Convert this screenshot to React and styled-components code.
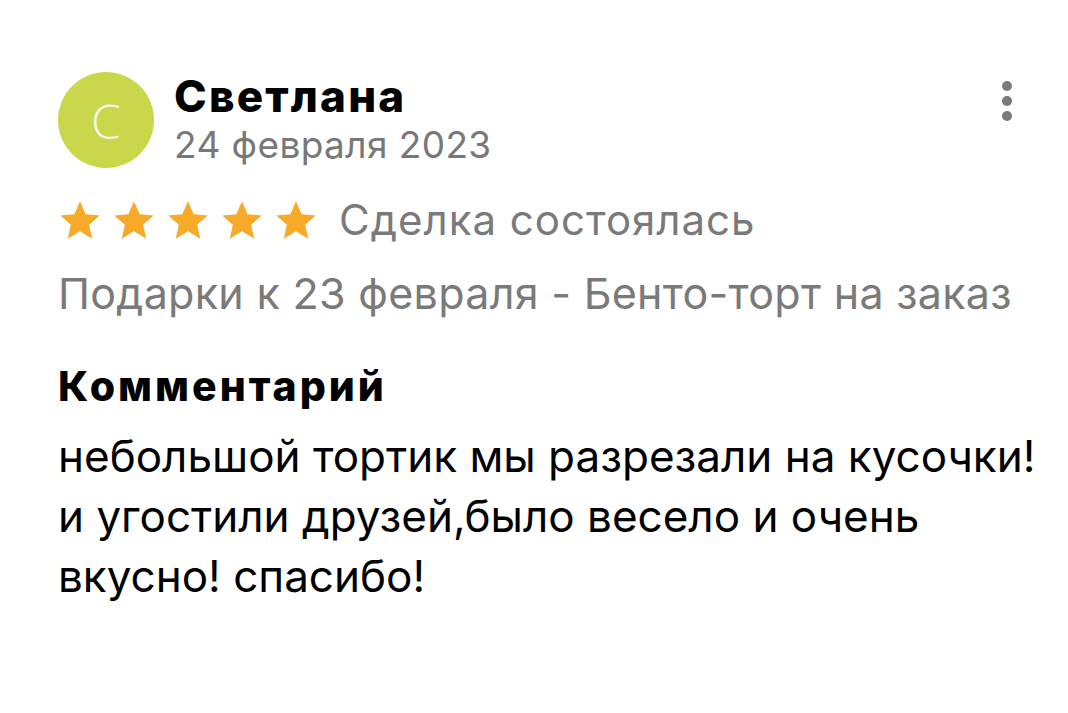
import React from "react";
import styled, { createGlobalStyle } from "styled-components";

const Global = createGlobalStyle`
  html, body { margin: 0; padding: 0; background: #ffffff; }
  body { font-family: Inter, Roboto, "Noto Sans", sans-serif; -webkit-font-smoothing: antialiased; }
`;

const Page = styled.div`
  width: 1068px;
  height: 713px;
  box-sizing: border-box;
  padding: 72px 10px 0 58px;
  background: #fff;
`;

const Header = styled.div`
  display: flex;
  align-items: flex-start;
  padding-right: 40px;
`;

const Avatar = styled.div`
  width: 96px;
  height: 96px;
  border-radius: 50%;
  background: #c9d84a;
  color: #f6f7e4;
  display: flex;
  align-items: center;
  justify-content: center;
  font-family: "Open Sans", sans-serif;
  font-weight: 300;
  font-size: 48px;
  flex-shrink: 0;
`;

const Who = styled.div`
  margin-left: 20px;
  display: flex;
  flex-direction: column;
  flex: 1;
`;

const Name = styled.div`
  font-size: 44px;
  font-weight: 800;
  color: #000;
  line-height: 48px;
  letter-spacing: 2.2px;
`;

const DateText = styled.div`
  font-size: 37px;
  color: #787878;
  line-height: 50px;
  letter-spacing: 0.4px;
`;

const MoreButton = styled.button`
  border: 0;
  background: none;
  padding: 9px 6px 0;
  display: flex;
  flex-direction: column;
  gap: 5px;
`;

const Dot = styled.span`
  width: 10px;
  height: 10px;
  border-radius: 50%;
  background: #7a7a7a;
`;

const RatingRow = styled.div`
  display: flex;
  align-items: center;
  margin-top: 24px;
`;

const Stars = styled.div`
  display: flex;
  gap: 10px;
  margin-right: 21px;
`;

const Status = styled.span`
  font-size: 42px;
  color: #7a7a7a;
  letter-spacing: 1px;
`;

const Subject = styled.div`
  margin-top: 20px;
  font-size: 43px;
  color: #7a7a7a;
  line-height: 56px;
  letter-spacing: 0.3px;
`;

const CommentTitle = styled.div`
  margin-top: 40px;
  font-size: 41px;
  font-weight: 800;
  color: #000;
  line-height: 50px;
  letter-spacing: 3px;
`;

const CommentBody = styled.p`
  margin: 15px 0 0;
  width: 1000px;
  font-size: 44px;
  color: #000;
  line-height: 60px;
`;

const Star = () => (
  <svg width="44" height="42" viewBox="0 0 24 23">
    <path
      d="M12 1.2l3.1 7.1 7.7.7-5.8 5.1 1.7 7.6L12 17.7l-6.7 4 1.7-7.6L1.2 9l7.7-.7z"
      fill="#f7a928"
    />
  </svg>
);

export default function App() {
  return (
    <>
      <Global />
      <Page>
        <Header>
          <Avatar>C</Avatar>
          <Who>
            <Name>Светлана</Name>
            <DateText>24 февраля 2023</DateText>
          </Who>
          <MoreButton aria-label="Ещё">
            <Dot />
            <Dot />
            <Dot />
          </MoreButton>
        </Header>
        <RatingRow>
          <Stars>
            {[0, 1, 2, 3, 4].map((i) => (
              <Star key={i} />
            ))}
          </Stars>
          <Status>Сделка состоялась</Status>
        </RatingRow>
        <Subject>Подарки к 23 февраля - Бенто-торт на заказ</Subject>
        <CommentTitle>Комментарий</CommentTitle>
        <CommentBody>
          небольшой тортик мы разрезали на кусочки! и угостили друзей,было весело и очень вкусно! спасибо!
        </CommentBody>
      </Page>
    </>
  );
}
